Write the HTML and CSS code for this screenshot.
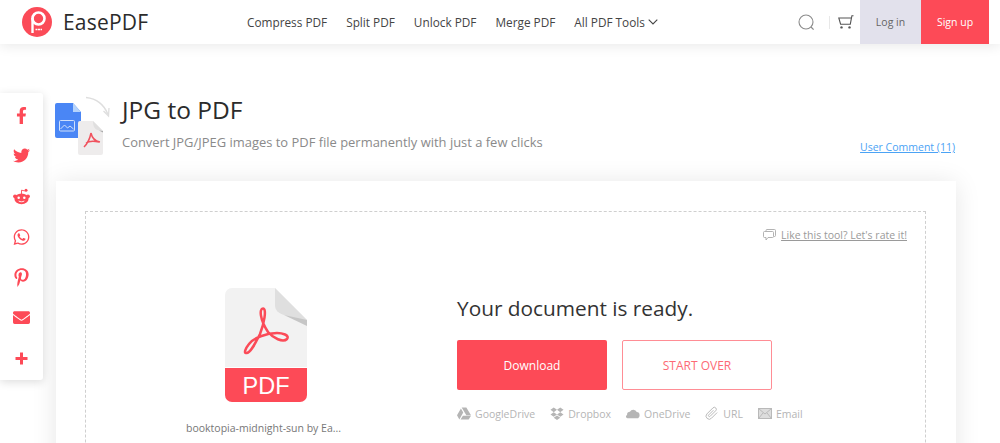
FILE: index.html
```html
<!doctype html>
<html lang="en">

<head>
    <meta charset="UTF-8">
    <meta name="viewport" content="width=device-width, initial-scale=1.0">
    <title>JPG to PDF</title>
    <link rel="stylesheet" href="styles.css">
</head>

<body>
    <div class="header">
        <a class="logo" href="#">
            <svg width="30" height="30" viewBox="0 0 30 30">
                <circle cx="15" cy="15" r="15" fill="#fb4b58"/>
                <circle cx="16.5" cy="11.5" r="6" fill="none" stroke="#fff" stroke-width="2.6"/>
                <path d="M10.5 11v15" stroke="#fff" stroke-width="2.4"/>
                <path d="M13.5 22.5h6.5" stroke="#fff" stroke-width="1.4" stroke-dasharray="2 .5"/>
            </svg>
            <span>EasePDF</span>
        </a>
        <div class="nav">
            <a href="#">Compress PDF</a>
            <a href="#">Split PDF</a>
            <a href="#">Unlock PDF</a>
            <a href="#">Merge PDF</a>
            <a href="#">All PDF Tools
                <svg width="10" height="6" viewBox="0 0 10 6"><path d="M.7.7 5 5l4.3-4.3" fill="none" stroke="#444" stroke-width="1.1"/></svg>
            </a>
        </div>
        <div class="header-right">
            <svg class="search" width="17" height="17" viewBox="0 0 17 17">
                <circle cx="8" cy="8" r="7" fill="none" stroke="#8b8b8b" stroke-width="1.1"/>
                <path d="M13 13l2.6 2.6" stroke="#8b8b8b" stroke-width="1.3"/>
            </svg>
            <span class="divider"></span>
            <svg class="cart" width="16" height="14" viewBox="0 0 16 14">
                <path d="M15.5.7h-1.6l-1.6 8.5H2.6L.8 3h12.7" fill="none" stroke="#555" stroke-width="1.1"/>
                <circle cx="3.5" cy="12.4" r="1.2" fill="#555"/>
                <circle cx="11.5" cy="12.4" r="1.2" fill="#555"/>
            </svg>
            <a class="btn-login" href="#">Log in</a>
            <a class="btn-signup" href="#">Sign up</a>
        </div>
    </div>

    <div class="share">
        <svg width="11" height="17" viewBox="0 0 320 512"><path d="M279.14 288l14.22-92.66h-88.91v-60.13c0-25.35 12.42-50.06 52.24-50.06h40.42V6.26S260.43 0 225.36 0c-73.22 0-121.08 44.38-121.08 124.72v70.62H22.89V288h81.39v224h100.17V288z"/></svg>
        <svg width="17" height="17" viewBox="0 0 512 512"><path d="M459.37 151.716c.325 4.548.325 9.097.325 13.645 0 138.72-105.583 298.558-298.558 298.558-59.452 0-114.68-17.219-161.137-47.106 8.447.974 16.568 1.299 25.34 1.299 49.055 0 94.213-16.568 130.274-44.832-46.132-.975-84.792-31.188-98.112-72.772 6.498.974 12.995 1.624 19.818 1.624 9.421 0 18.843-1.3 27.614-3.573-48.081-9.747-84.143-51.98-84.143-102.985v-1.299c13.969 7.797 30.214 12.67 47.431 13.319-28.264-18.843-46.781-51.005-46.781-87.391 0-19.492 5.197-37.36 14.294-52.954 51.655 63.675 129.3 105.258 216.365 109.807-1.624-7.797-2.599-15.918-2.599-24.04 0-57.828 46.782-104.934 104.934-104.934 30.213 0 57.502 12.67 76.67 33.137 23.715-4.548 46.456-13.32 66.599-25.34-7.798 24.366-24.366 44.833-46.132 57.827 21.117-2.273 41.584-8.122 60.426-16.243-14.292 20.791-32.161 39.308-52.628 54.253z"/></svg>
        <svg width="17" height="17" viewBox="0 0 17 17">
            <path d="M8.5 6V2.2l3.2.7" fill="none" stroke="#fd4a57" stroke-width=".9"/>
            <circle cx="13" cy="2.2" r="1.5"/>
            <circle cx="2" cy="8.3" r="1.9"/>
            <circle cx="15" cy="8.3" r="1.9"/>
            <ellipse cx="8.5" cy="10.8" rx="7.1" ry="5.4"/>
            <circle cx="5.7" cy="9.8" r="1.25" fill="#fff"/>
            <circle cx="11.3" cy="9.8" r="1.25" fill="#fff"/>
            <path d="M5.7 13c1.6 1 4 1 5.6 0" fill="none" stroke="#fff" stroke-width=".9"/>
        </svg>
        <svg width="17" height="18" viewBox="0 0 448 512"><path d="M380.9 97.1C339 55.1 283.2 32 223.9 32c-122.4 0-222 99.6-222 222 0 39.1 10.2 77.3 29.6 111L0 480l117.7-30.9c32.4 17.7 68.9 27 106.1 27h.1c122.3 0 224.1-99.6 224.1-222 0-59.3-25.2-115-67.1-157zm-157 341.6c-33.2 0-65.7-8.9-94-25.7l-6.7-4-69.8 18.3L72 359.2l-4.4-7c-18.5-29.4-28.2-63.3-28.2-98.2 0-101.7 82.8-184.5 184.6-184.5 49.3 0 95.6 19.2 130.4 54.1 34.8 34.9 56.2 81.2 56.1 130.5 0 101.8-84.9 184.6-186.6 184.6zm101.2-138.2c-5.5-2.8-32.8-16.2-37.9-18-5.1-1.9-8.8-2.8-12.5 2.8-3.7 5.6-14.3 18-17.6 21.8-3.2 3.7-6.5 4.2-12 1.4-32.6-16.3-54-29.1-75.5-66-5.7-9.8 5.7-9.1 16.3-30.3 1.8-3.7.9-6.9-.5-9.7-1.4-2.8-12.5-30.1-17.1-41.2-4.5-10.8-9.1-9.3-12.5-9.5-3.2-.2-6.9-.2-10.6-.2-3.7 0-9.7 1.4-14.8 6.9-5.1 5.6-19.4 19-19.4 46.3 0 27.3 19.9 53.7 22.6 57.4 2.8 3.7 39.1 59.7 94.8 83.8 35.2 15.2 49 16.5 66.6 13.9 10.7-1.6 32.8-13.4 37.4-26.4 4.6-13 4.6-24.1 3.2-26.4-1.3-2.5-5-3.9-10.5-6.6z"/></svg>
        <svg width="15" height="19" viewBox="0 0 384 512"><path d="M204 6.5C101.4 6.5 0 74.9 0 185.6 0 256 39.6 296 63.6 296c9.9 0 15.6-27.6 15.6-35.4 0-9.3-23.7-29.1-23.7-67.8 0-80.4 61.2-137.4 140.4-137.4 68.1 0 118.5 38.7 118.5 109.8 0 53.1-21.3 152.7-90.3 152.7-24.9 0-46.2-18-46.2-43.8 0-37.8 26.4-74.4 26.4-113.4 0-66.2-93.9-54.2-93.9 25.8 0 16.8 2.1 35.4 9.6 50.7-13.8 59.4-42 147.9-42 209.1 0 18.9 2.7 37.5 4.5 56.4 3.4 3.8 1.7 3.4 6.9 1.5 50.4-69 48.6-82.5 71.4-172.8 12.3 23.4 44.1 36 69.3 36 106.2 0 153.9-103.5 153.9-196.8C384 71.3 298.2 6.5 204 6.5z"/></svg>
        <svg width="17" height="17" viewBox="0 0 512 512"><path d="M502.3 190.8c3.9-3.1 9.7-.2 9.7 4.7V400c0 26.5-21.5 48-48 48H48c-26.5 0-48-21.5-48-48V195.6c0-5 5.7-7.8 9.7-4.7 22.4 17.4 52.1 39.5 154.1 113.6 21.1 15.4 56.7 47.8 92.2 47.6 35.7.3 72-32.8 92.3-47.6 102-74.1 131.6-96.3 154-113.7zM256 320c23.2.4 56.6-29.2 73.4-41.4 132.7-96.3 142.8-104.7 173.4-128.7 5.8-4.5 9.2-11.5 9.2-18.9v-19c0-26.5-21.5-48-48-48H48C21.5 64 0 85.5 0 112v19c0 7.4 3.4 14.3 9.2 18.9 30.6 23.9 40.7 32.4 173.4 128.7 16.8 12.2 50.2 41.8 73.4 41.4z"/></svg>
        <svg width="13" height="13" viewBox="0 0 13 13"><path d="M5 .5h3V5h4.5v3H8v4.5H5V8H.5V5H5z"/></svg>
    </div>

    <div class="main">
        <div class="tool-head">
            <svg class="tool-icon" width="56" height="60" viewBox="0 0 56 60">
                <path d="M32 1.500c10 1 18 7 22 17" fill="none" stroke="#dedede" stroke-width="1.5"/>
                <path d="M49.500 15l5 5 .5-8" fill="none" stroke="#dedede" stroke-width="1.3"/>
                <path d="M1 9a2 2 0 0 1 2-2h16l8 9v24a2 2 0 0 1-2 2H3a2 2 0 0 1-2-2z" fill="#4a86f5"/>
                <path d="M19 7l8 9h-8z" fill="#b5d3fb"/>
                <rect x="5.5" y="24.5" width="15" height="10.5" rx="1" fill="none" stroke="#cfe0fb" stroke-width="1"/>
                <path d="M6.500 33l4-4 3 3 2.500-2 3.500 3" fill="none" stroke="#cfe0fb" stroke-width="1"/>
                <path d="M24 27a2 2 0 0 1 2-2h13l10 10v22a2 2 0 0 1-2 2H26a2 2 0 0 1-2-2z" fill="#eeecec"/>
                <path d="M39 25l10 10-4-.5c-4-1-6-3-6-9.500z" fill="#e0dfdf"/>
                <path d="M45 34.500l4 .5v1.500z" fill="#a9a9a9"/>
                <path d="M37 37c-1 5-3 10-7 14M37 37c1 5 3 8 9 9M32 47c3-2 8-2 13-1" fill="none" stroke="#f0525e" stroke-width="1.5"/>
            </svg>
            <div class="tool-text">
                <h1>JPG to PDF</h1>
                <p>Convert JPG/JPEG images to PDF file permanently with just a few clicks</p>
            </div>
            <a class="comment-link" href="#">User Comment (11)</a>
        </div>

        <div class="card">
            <div class="dashed">
                <div class="rate">
                    <svg width="13" height="12" viewBox="0 0 13 12">
                        <path d="M3 2.500V1.500a1 1 0 0 1 1-1h7.500a1 1 0 0 1 1 1v5a1 1 0 0 1-1 1H11" fill="none" stroke="#aaa" stroke-width=".9"/>
                        <path d="M1.500 2.500h8a1 1 0 0 1 1 1v4a1 1 0 0 1-1 1H5l-2 2.500V8.500H1.500a1 1 0 0 1-1-1v-4a1 1 0 0 1 1-1z" fill="#fff" stroke="#aaa" stroke-width=".9"/>
                    </svg>
                    <a href="#">Like this tool? Let's rate it!</a>
                </div>
                <div class="result">
                    <div class="file">
                        <svg width="82" height="114" viewBox="0 0 82 114">
                            <path d="M7 0h43l32 32v50H0V7a7 7 0 0 1 7-7z" fill="#f2f2f2"/>
                            <path d="M50 0l32 32-2 1-21-6c-6-2-9-5-9-10z" fill="#dfdfdf"/>
                            <path d="M59 27l23 5v6z" fill="#c6c6c6"/>
                            <path d="M0 80h82v27a7 7 0 0 1-7 7H7a7 7 0 0 1-7-7z" fill="#fd4a57"/>
                            <path d="M0 79.500h82" stroke="#fff" stroke-width="1"/>
                            <path d="M38 20.500C34 20.500 35 32 43 44c5 6 15 11 19 7 3-4-5-6-10-6-10 0-24 5-28 11-4 5-5 9-3 9 4 1 9-9 14-19 4-10 7-25.500 3-25.500z" fill="none" stroke="#fb4b58" stroke-width="2.5"/>
                            <text class="pdf-label" x="41" y="106" text-anchor="middle">PDF</text>
                        </svg>
                        <div class="file-name">booktopia-midnight-sun by Ea...</div>
                    </div>
                    <div class="actions">
                        <h2>Your document is ready.</h2>
                        <div class="buttons">
                            <a class="btn-download" href="#">Download</a>
                            <a class="btn-over" href="#">START OVER</a>
                        </div>
                        <div class="targets">
                            <span>
                                <svg width="14" height="13" viewBox="0 0 15 13"><path d="M5 0h5l5 8.500h-5zM4.200 1.200 6.700 5.500 2.500 13 0 8.500zM3.800 13l2.500-4h8.700L12.500 13z"/></svg>
                                GoogleDrive
                            </span>
                            <span>
                                <svg width="14" height="14" viewBox="0 0 15 14"><path d="M4 0l3.500 2.500L4 5 .5 2.500zM11 0l3.500 2.500L11 5 7.500 2.500zM4 5l3.500 2.500L4 10 .5 7.500zM11 5l3.500 2.500L11 10 7.500 7.500zM7.500 8.500 11 11l-3.500 2.500L4 11z"/></svg>
                                Dropbox
                            </span>
                            <span>
                                <svg width="14" height="11" viewBox="0 0 15 11"><path d="M1.500 10.500a1.800 1.800 0 0 1-.3-3.500 3 3 0 0 1 3-3.500 4 4 0 0 1 7.300.5 3.300 3.300 0 0 1 3 3.500 3 3 0 0 1-1.500 3z"/></svg>
                                OneDrive
                            </span>
                            <span>
                                <svg width="14" height="15" viewBox="0 0 15 15"><path d="M13 6.500 7 12.500a3 3 0 0 1-5-4.500l6.500-6.500a2 2 0 0 1 3 3l-6 6a1 1 0 0 1-1.500-1.500l5-5" fill="none" stroke="#b5b5b5" stroke-width="1"/></svg>
                                URL
                            </span>
                            <span>
                                <svg width="14" height="11" viewBox="0 0 14 11"><rect x=".5" y=".5" width="13" height="10" fill="#ddd" stroke="#b9b9b9"/><path d="M.5.500 7 6l6.500-5.500M.5 10.500l4.500-5.500M13.500 10.500 9 5" fill="none" stroke="#b9b9b9"/></svg>
                                Email
                            </span>
                        </div>
                    </div>
                </div>
            </div>
        </div>
    </div>
</body>

</html>
```

FILE: styles.css
```css
html,
body {
    height: 443px;
    overflow: hidden;
}

body {
    margin: 0;
    background-color: #fff;
    font-family: 'Open Sans', sans-serif;
    color: #333;
}

a {
    text-decoration: none;
    color: inherit;
}

.header {
    display: flex;
    align-items: center;
    height: 44px;
    padding: 0 11px 0 22px;
    background-color: #fff;
    box-shadow: 0 2px 12px rgba(0, 0, 0, 0.09);
}

.logo {
    display: flex;
    align-items: center;
    gap: 11px;
    width: 225px;
    font-size: 21px;
    color: #2b2b2b;
    letter-spacing: 0.2px;
}

.nav {
    display: flex;
    gap: 19px;
    font-size: 11.8px;
    color: #444;
}

.nav svg {
    vertical-align: 2px;
}

.header-right {
    display: flex;
    align-items: center;
    margin-left: auto;
    height: 44px;
}

.divider {
    width: 1px;
    height: 13px;
    margin: 0 8px 0 14px;
    background-color: #e8e8e8;
}

.btn-login,
.btn-signup {
    display: flex;
    align-items: center;
    justify-content: center;
    height: 44px;
    font-size: 10.5px;
}

.cart {
    margin-right: 6px;
}

.btn-login {
    width: 61px;
    background-color: #e2e1ec;
    color: #666;
}

.btn-signup {
    width: 68px;
    background-color: #fd4a57;
    color: #fff;
}

.share {
    position: fixed;
    top: 93px;
    left: 0;
    width: 43px;
    height: 287px;
    padding-top: 2px;
    box-sizing: border-box;
    display: grid;
    grid-auto-rows: 40.5px;
    place-items: center;
    background-color: #fff;
    border-radius: 0 3px 3px 0;
    box-shadow: 0 2px 10px rgba(0, 0, 0, 0.14);
}

.share svg {
    fill: #fd4a57;
}

.main {
    width: 900px;
    margin-left: 56px;
}

.tool-head {
    display: flex;
    height: 137px;
    padding-top: 49px;
    box-sizing: border-box;
}

.tool-icon {
    margin: 3px 0 0 -2px;
    flex: none;
}

.tool-text {
    margin-left: 12px;
}

h1 {
    margin: 0;
    font-size: 24.5px;
    font-weight: 400;
    line-height: 34px;
    color: #2b2b2b;
}

.tool-text p {
    margin: 6px 0 0;
    font-size: 12.95px;
    color: #8a8a8a;
}

.comment-link {
    margin: 47px 1px 0 auto;
    font-size: 10.5px;
    color: #4ba3f5;
    text-decoration: underline;
}

.card {
    height: 300px;
    padding: 30px 30px 0 29px;
    background-color: #fff;
    box-shadow: 0 2px 24px rgba(0, 0, 0, 0.1);
}

.dashed {
    height: 300px;
    padding: 0 18px 0 0;
    border: 1px dashed #cfcfcf;
    border-bottom: 0;
}

.rate {
    display: flex;
    justify-content: flex-end;
    align-items: center;
    gap: 5px;
    padding-top: 16px;
    font-size: 10.5px;
    color: #9a9a9a;
}

.rate a {
    text-decoration: underline;
}

.result {
    display: flex;
    margin-top: 47px;
}

.file {
    width: 371px;
    padding-left: 100px;
    box-sizing: border-box;
    margin-top: -1px;
}

.file svg {
    display: block;
    margin-left: 39px;
}

.pdf-label {
    font-family: 'Liberation Sans', sans-serif;
    font-size: 23.5px;
    fill: #fff;
}

.file-name {
    margin-top: 19px;
    font-size: 10.5px;
    color: #777;
    white-space: nowrap;
}

.actions {
    padding-top: 4px;
}

h2 {
    margin: 0;
    font-size: 20.8px;
    font-weight: 400;
    line-height: 30px;
    color: #333;
}

.buttons {
    display: flex;
    gap: 15px;
    margin-top: 17px;
}

.btn-download,
.btn-over {
    display: flex;
    align-items: center;
    justify-content: center;
    width: 150px;
    height: 50px;
    box-sizing: border-box;
    border-radius: 2px;
    font-size: 12px;
}

.btn-download {
    background-color: #fd4a57;
    color: #fff;
}

.btn-over {
    border: 1px solid #ff8d95;
    color: #fd6a75;
}

.targets {
    display: flex;
    gap: 15px;
    margin-top: 16px;
    font-size: 10.5px;
    color: #b5b5b5;
}

.targets span {
    display: flex;
    align-items: center;
    gap: 4px;
}

.targets svg {
    fill: #b5b5b5;
}
```
